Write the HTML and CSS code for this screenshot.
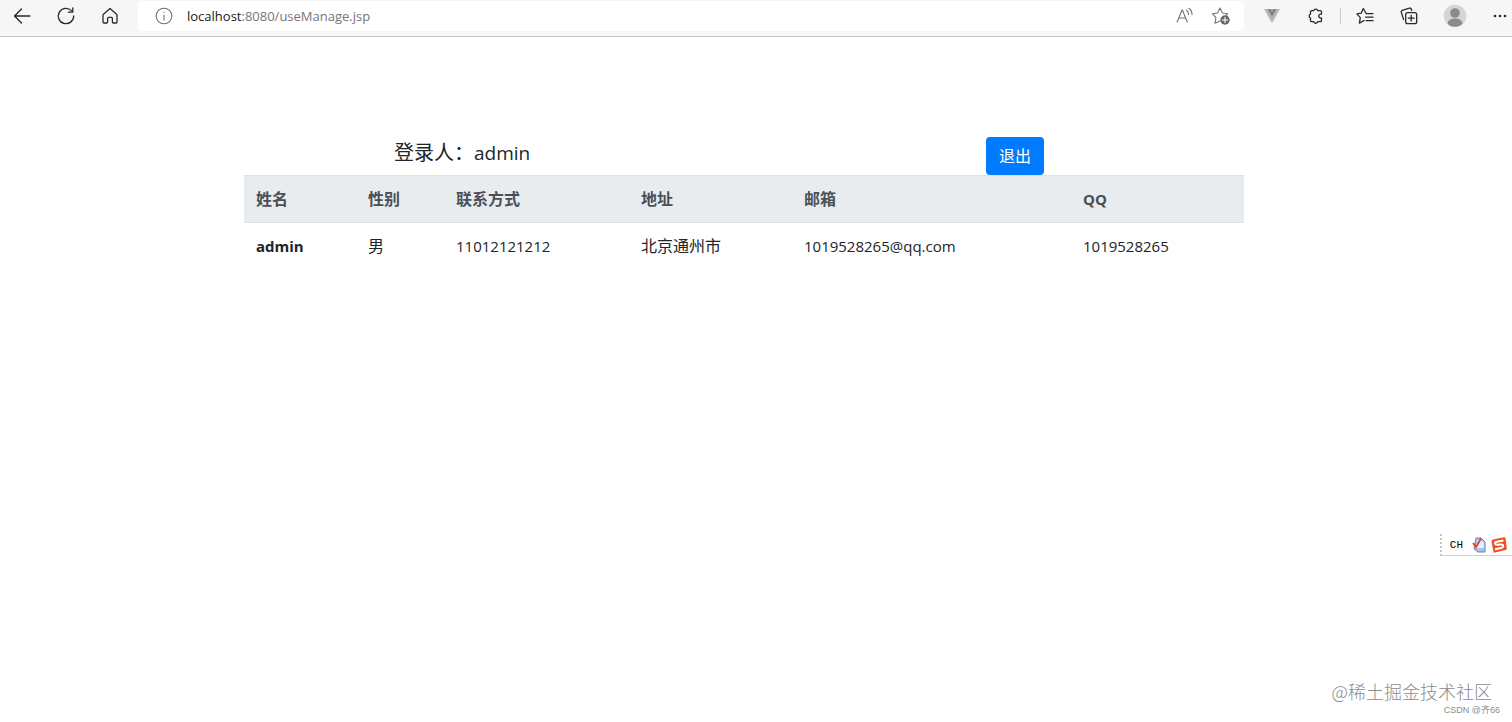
FILE: index.html
```html
<!DOCTYPE html>
<html lang="zh-CN">

<head>
    <meta charset="UTF-8">
    <meta name="viewport" content="width=device-width, initial-scale=1.0">
    <title>useManage</title>
    <link rel="stylesheet" href="styles.css">
</head>

<body>
    <!-- browser toolbar -->
    <header class="toolbar">
        <button class="tool" type="button" aria-label="Back">
            <svg width="20" height="20" viewBox="0 0 20 20"><path d="M18 10H2.5M9.5 3L2.5 10l7 7"/></svg>
        </button>
        <button class="tool" type="button" aria-label="Refresh">
            <svg width="20" height="20" viewBox="0 0 20 20"><path d="M15.5 4.6A7.7 7.7 0 1 0 17.7 10M16.8 1.8v4.4h-4.4"/></svg>
        </button>
        <button class="tool" type="button" aria-label="Home">
            <svg width="20" height="20" viewBox="0 0 20 20"><path d="M3 9.4q0-.9.7-1.500L10 2.500l6.300 5.400q.7.6.7 1.500v6.500q0 1.100-1 1.100h-2.600q-1 0-1-1v-3.700q0-1-1-1H8.600q-1 0-1 1V16q0 1-1 1H4q-1 0-1-1.100z"/></svg>
        </button>

        <div class="address">
            <svg class="info" width="18" height="18" viewBox="0 0 18 18"><circle cx="9" cy="9" r="7.8"/><path d="M9 8v5M9 5v.4"/></svg>
            <span class="url"><span class="host">localhost</span>:8080/useManage.jsp</span>
            <button class="tool small grey" type="button" aria-label="Read aloud">
                <svg width="18" height="18" viewBox="0 0 18 18"><path d="M1.2 15L6 3h.4l4.800 12M2.900 11h6.800M10.600 3.200q2 1.500 2 4.200M12.800 1.300q3.200 2 3.200 6.300"/></svg>
            </button>
            <button class="tool small grey" type="button" aria-label="Add to favorites">
                <svg width="20" height="20" viewBox="0 0 20 20"><path d="M9 15L4 17.2l.9-5.6L1.5 7.8l5-.8L9 2l2.500 5 5.200.8-1.500 1.600"/><circle class="fill" cx="14" cy="14" r="4.7"/><path class="light" d="M14 11.400v5.200M11.400 14h5.200"/></svg>
            </button>
        </div>

        <button class="tool" type="button" aria-label="Vue devtools">
            <svg width="18" height="18" viewBox="0 0 18 18"><path class="vue-light" d="M1 2h16L9 16z"/><path class="vue-dark" d="M4.6 2h3L9 4.500 10.400 2h3L9 10z"/></svg>
        </button>
        <button class="tool" type="button" aria-label="Extensions">
            <svg width="18" height="18" viewBox="0 0 18 18"><path d="M4.700 3.700h2a2.100 2.100 0 0 1 4.100 0h2.500q1.200 0 1.200 1.200v2.300c-3.700-.7-3.700 4.500 0 3.800v2.400q0 1.200-1.200 1.200h-2.500a2.100 2.100 0 0 1-4.100 0h-2q-1.200 0-1.200-1.200V11a2.100 2.100 0 0 1 0-3.900V4.900q0-1.200 1.200-1.200z"/></svg>
        </button>
        <span class="divider"></span>
        <button class="tool" type="button" aria-label="Favorites">
            <svg width="18" height="18" viewBox="0 0 18 18"><path d="M11.500 6.700h-1.200L7.300 1.500 5.200 6.200l-4.300.7 3.400 3.700-.9 5.500L8.200 13.500M11.400 6.700H17M9.700 10.200H17M10.200 13.700H17"/></svg>
        </button>
        <button class="tool" type="button" aria-label="Collections">
            <svg width="18" height="18" viewBox="0 0 18 18"><rect x="5.7" y="5.7" width="11" height="11" rx="2"/><path d="M11.200 8.300v5.800M8.300 11.200h5.800M3.600 12.600L1.300 5.200q-.4-1.300.9-1.800l7.300-2.200q1.300-.4 1.800.9l.5 1.400"/></svg>
        </button>
        <button class="tool profile" type="button" aria-label="Profile">
            <svg width="24" height="24" viewBox="0 0 24 24"><circle class="avatar-bg" cx="12" cy="12" r="11.3"/><circle class="avatar" cx="12" cy="9" r="4.8"/><path class="avatar" d="M4.500 19.500q1-5 7.500-5t7.500 5q-3 3.300-7.500 3.300t-7.500-3.300z"/></svg>
        </button>
        <button class="tool more" type="button" aria-label="Settings">
            <svg width="16" height="16" viewBox="0 0 16 16"><circle class="dot" cx="3" cy="8" r="1.3"/><circle class="dot" cx="8" cy="8" r="1.3"/><circle class="dot" cx="13" cy="8" r="1.3"/></svg>
        </button>
    </header>

    <main class="container">
        <!-- current user and logout -->
        <div class="user-bar">
            <h1>登录人：<span>admin</span></h1>
            <button class="btn" type="button">退出</button>
        </div>

        <!-- user list -->
        <table class="table">
            <thead>
                <tr>
                    <th scope="col" class="name">姓名</th>
                    <th scope="col" class="sex">性别</th>
                    <th scope="col" class="phone">联系方式</th>
                    <th scope="col" class="city">地址</th>
                    <th scope="col" class="mail">邮箱</th>
                    <th scope="col" class="latin">QQ</th>
                </tr>
            </thead>
            <tbody>
                <tr>
                    <th scope="row" class="latin">admin</th>
                    <td>男</td>
                    <td class="latin">11012121212</td>
                    <td>北京通州市</td>
                    <td class="latin">1019528265@qq.com</td>
                    <td class="latin">1019528265</td>
                </tr>
            </tbody>
        </table>
    </main>

    <!-- input method bar -->
    <div class="ime">
        <span>CH</span>
        <svg width="16" height="16" viewBox="0 0 16 16"><path d="M5 1h5l4 4v10H7L3 12z" fill="#a9c3ea" stroke="#6585b8"/><path d="M6 3h4l3 3v5H6z" fill="#e4eefb"/><path d="M2 6l3 4 5-8.500" fill="none" stroke="#e2442f" stroke-width="2"/></svg>
        <svg width="16" height="16" viewBox="0 0 16 16"><path d="M2 2.500L13 .3q1.300-.2 1.500 1.100l1.300 10q.1 1.300-1.200 1.600L4 15.600q-1.300.3-1.600-1L.5 4.500Q.2 2.900 2 2.500z" fill="#f0501e"/><path d="M12.500 3.500L6 4.700q-2.300.4-2 1.800.3 1.300 2.500 1.200l3.500-.2q2.200-.1 2.200 1.400 0 1.600-2 2l-6.200 1.300" fill="none" stroke="#fff" stroke-width="2"/></svg>
    </div>

    <!-- watermarks -->
    <footer class="marks">
        <p class="community">@稀土掘金技术社区</p>
        <p class="author">CSDN @齐66</p>
    </footer>
</body>

</html>
```
FILE: styles.css
```css
* {
    box-sizing: border-box;
}

body {
    margin: 0;
    min-height: 100vh;
    background-color: #ffffff;
    color: #212529;
    font-family: "Open Sans", "Noto Sans CJK SC", sans-serif;
    font-size: 16px;
    line-height: 24px;
    display: flex;
    flex-direction: column;
}

button {
    font: inherit;
    border: none;
    cursor: pointer;
}

/* toolbar */
.toolbar {
    height: 37px;
    padding-bottom: 4px;
    display: flex;
    align-items: center;
    background-color: #f6f6f6;
    border-bottom: 1px solid #c6c6c6;
}

.tool {
    flex: none;
    width: 44px;
    height: 32px;
    padding: 0;
    display: flex;
    align-items: center;
    justify-content: center;
    background: none;
}

.tool svg,
.info {
    fill: none;
    stroke: #292929;
    stroke-width: 1.3;
    stroke-linejoin: round;
    stroke-linecap: round;
}

.small {
    width: 36px;
}

.grey svg,
.info {
    stroke: #737373;
    stroke-width: 1.1;
}

.tool .fill {
    fill: #666666;
    stroke: none;
}

.tool .light {
    stroke: #ffffff;
}

.tool .vue-light {
    fill: #b5b5b5;
    stroke: none;
}

.tool .vue-dark {
    fill: #858585;
    stroke: none;
}

.tool .avatar-bg {
    fill: #d5d5d3;
    stroke: none;
}

.tool .avatar {
    fill: #8b8b88;
    stroke: none;
}

.tool .dot {
    fill: #292929;
    stroke: none;
}

.profile {
    width: 48px;
}

.more {
    width: 33px;
    padding-left: 9px;
}

.address {
    flex: 1;
    height: 30px;
    margin: 0 6px;
    padding: 0 5px 0 17px;
    display: flex;
    align-items: center;
    background-color: #ffffff;
    border-radius: 4px;
}

.url {
    flex: 1;
    margin-left: 14px;
    color: #767676;
    font-size: 13px;
}

.host {
    color: #202020;
}

.divider {
    width: 1px;
    height: 16px;
    margin: 0 2px;
    background-color: #c8c8c8;
}

/* page content */
.container {
    flex: 1;
    width: 1000px;
    max-width: 100%;
    margin: 100px auto 0;
    position: relative;
    right: 12px;
}

.user-bar {
    padding: 0 20% 0 15%;
    display: flex;
    justify-content: space-between;
}

h1 {
    margin: 4px 0 0;
    font-size: 20px;
    font-weight: 400;
    line-height: 24px;
}

h1 span {
    font-size: 19px;
}

.btn {
    height: 38px;
    padding: 0 13px;
    color: #ffffff;
    background-color: #007bff;
    border-radius: 4px;
}

.table {
    width: 100%;
    table-layout: fixed;
    border-collapse: collapse;
}

.table th,
.table td {
    padding: 11px 12px;
    text-align: left;
    border-top: 1px solid #dee2e6;
}

.table thead th {
    color: #495057;
    background-color: #e9ecef;
    border-bottom: 1px solid #dee2e6;
}

.table .latin {
    font-size: 15px;
}

.name {
    width: 11.2%;
}

.sex {
    width: 8.8%;
}

.phone {
    width: 18.5%;
}

.city {
    width: 16.3%;
}

.mail {
    width: 27.9%;
}

/* input method bar */
.ime {
    position: fixed;
    right: 0;
    bottom: 166px;
    height: 22px;
    padding: 0 5px 0 8px;
    display: flex;
    align-items: center;
    gap: 4px;
    border-left: 2px dotted #c4c4c4;
    border-bottom: 1px solid #d0d0d0;
    background-color: #ffffff;
}

.ime span {
    margin-right: 4px;
    color: #000000;
    font-family: "Liberation Mono", monospace;
    font-size: 11px;
}

/* watermarks */
.marks {
    padding: 0 12px 5px 0;
    text-align: right;
    color: #8c8c8c;
}

.marks p {
    margin: 0;
}

.community {
    padding-right: 8px;
    font-family: "Noto Sans CJK SC", sans-serif;
    font-size: 18px;
    font-weight: 300;
}

.author {
    font-family: "Liberation Sans", "Noto Sans CJK SC", sans-serif;
    font-size: 9px;
    line-height: 14px;
}
```
